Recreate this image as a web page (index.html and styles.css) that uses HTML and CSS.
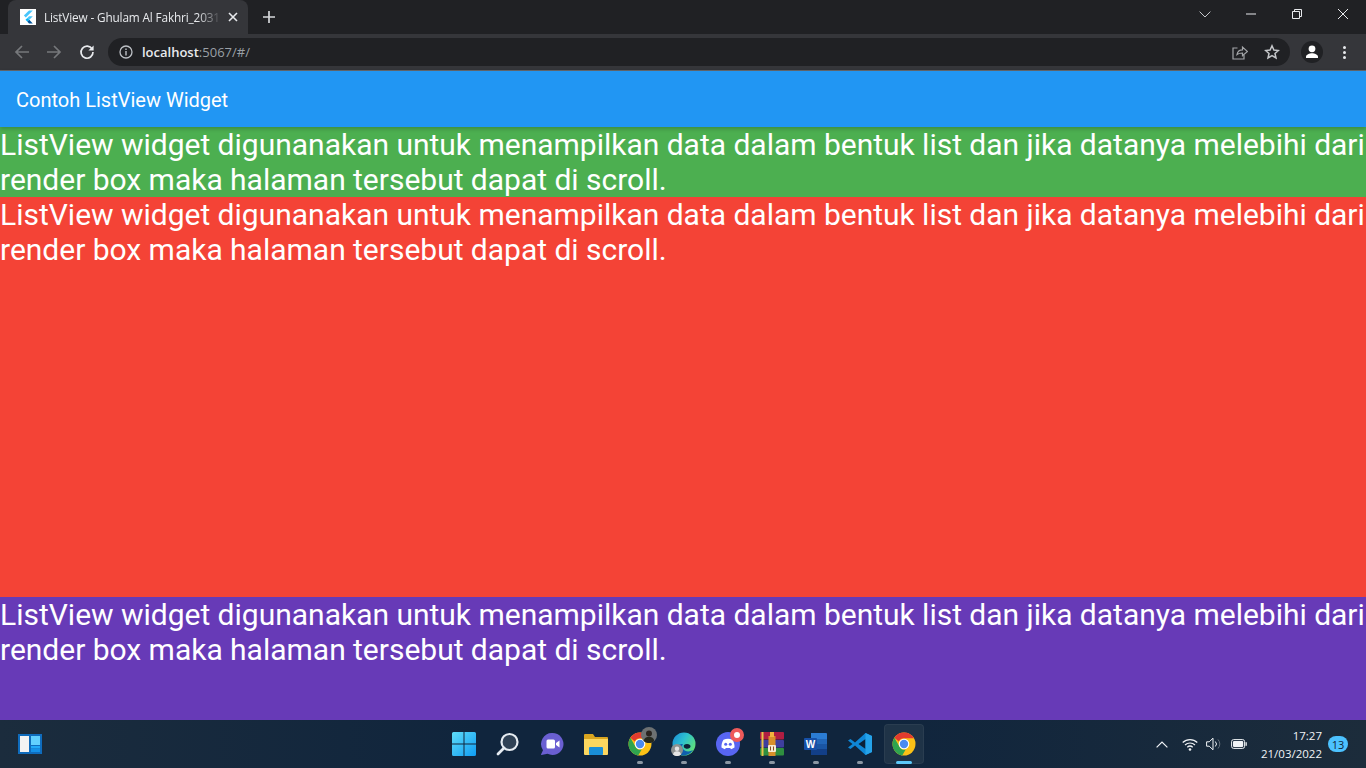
FILE: index.html
```html
<!DOCTYPE html>
<html lang="en">
<head>
  <meta charset="UTF-8" />
  <title>ListView - Ghulam Al Fakhri</title>
  <link rel="stylesheet" href="styles.css">
</head>
<body>
  <div class="tabstrip">
    <div class="tab">
      <span class="favicon">
        <svg width="16" height="16" viewBox="0 0 16 16"><path d="M9 1.500h3.800L5.800 8.500 3.900 6.600z" fill="#47c5fb"/><path d="M9 7.300h3.800L9.300 10.800l-1.900-1.900z" fill="#47c5fb"/><path d="M5.500 10.800l1.900-1.900 1.900 1.900-1.900 1.900z" fill="#00b5f8"/><path d="M7.400 12.700l1.900-1.900 3.500 3.700H9z" fill="#00569e"/></svg>
      </span>
      <span class="tab-title">ListView - Ghulam Al Fakhri_2031</span>
      <svg class="tab-close" width="10" height="10" viewBox="0 0 10 10"><path d="M1 1l8 8M9 1l-8 8" stroke="#e8eaed" stroke-width="1.6"/></svg>
    </div>
    <svg class="new-tab" width="12" height="12" viewBox="0 0 12 12"><path d="M6 0v12M0 6h12" stroke="#d5d7da" stroke-width="1.7"/></svg>
    <div class="window-controls">
      <svg class="win-chevron" width="12" height="7" viewBox="0 0 12 7"><path d="M.6.6L6 6l5.400-5.400" fill="none" stroke="#c6c8cb"/></svg>
      <svg class="win-min" width="10" height="2" viewBox="0 0 10 2"><path d="M0 1h10" stroke="#e8eaed"/></svg>
      <svg class="win-restore" width="10" height="10" viewBox="0 0 10 10"><path d="M.5 2.500h7v7h-7zM2.500 2.500v-2h7v7h-2" fill="none" stroke="#e8eaed"/></svg>
      <svg class="win-close" width="10" height="10" viewBox="0 0 10 10"><path d="M0 0l10 10M10 0L0 10" stroke="#e8eaed"/></svg>
    </div>
  </div>

  <div class="toolbar">
    <svg class="nav-btn" width="16" height="16" viewBox="0 0 16 16"><path d="M15 8H2M8 2L2 8l6 6" fill="none" stroke="#76787b" stroke-width="1.7"/></svg>
    <svg class="nav-btn" width="16" height="16" viewBox="0 0 16 16"><path d="M1 8h13M8 2l6 6-6 6" fill="none" stroke="#76787b" stroke-width="1.7"/></svg>
    <svg class="nav-btn nav-reload" width="16" height="16" viewBox="0 0 16 16"><path d="M13.200 5.200A6 6 0 1 0 14 8" fill="none" stroke="#e8eaed" stroke-width="1.700"/><path d="M14.600 1.400v5.200H9.400z" fill="#e8eaed"/></svg>
    <div class="omnibox">
      <svg class="info-icon" width="14" height="14" viewBox="0 0 14 14"><circle cx="7" cy="7" r="6" fill="none" stroke="#bdc1c6" stroke-width="1.300"/><path d="M7 6v4.400M7 3.600V5" stroke="#bdc1c6" stroke-width="1.400"/></svg>
      <span class="url"><b>localhost</b>:5067/#/</span>
      <svg class="share-icon" width="16" height="16" viewBox="0 0 16 16"><path d="M5.500 4H1v11h11v-4" fill="none" stroke="#a4a6a9" stroke-width="1.200"/><path d="M5 10.500C5.500 7.500 8 5.800 10.500 5.800V3l5 4.500-5 4.300V9C8.300 9 6.500 9.300 5 10.500z" fill="none" stroke="#a4a6a9" stroke-width="1.200"/></svg>
      <svg class="star-icon" width="16" height="16" viewBox="0 0 16 16"><path d="M8 1.800l1.900 4.200 4.500.5-3.400 3 1 4.500L8 11.700 4 14l1-4.500-3.400-3 4.500-.5z" fill="none" stroke="#c5c7ca" stroke-width="1.500"/></svg>
    </div>
    <span class="avatar">
      <svg width="16" height="16" viewBox="0 0 16 16"><circle cx="8" cy="4.800" r="3.400" fill="#fff"/><path d="M2 14v-1c0-2.500 3.500-3.700 6-3.700s6 1.200 6 3.700v1z" fill="#fff"/></svg>
    </span>
    <span class="menu-dots"><i></i><i></i><i></i></span>
  </div>

  <header class="app-bar">Contoh ListView Widget</header>

  <main class="list-view">
    <section class="item item-green">ListView widget digunanakan untuk menampilkan data dalam bentuk list dan jika datanya melebihi dari render box maka halaman tersebut dapat di scroll.</section>
    <section class="item item-red">ListView widget digunanakan untuk menampilkan data dalam bentuk list dan jika datanya melebihi dari render box maka halaman tersebut dapat di scroll.</section>
    <section class="item item-purple">ListView widget digunanakan untuk menampilkan data dalam bentuk list dan jika datanya melebihi dari render box maka halaman tersebut dapat di scroll.</section>
  </main>

  <footer class="taskbar">
    <div class="task-left">
      <svg width="24" height="20" viewBox="0 0 24 20"><rect width="24" height="20" fill="#0f6cbd"/><rect x="2" y="2" width="9" height="16" fill="#f3f3f3"/><rect x="13" y="2" width="9" height="9" fill="#62d0ff"/><rect x="13" y="12" width="9" height="2.500" fill="#20a8f8"/><rect x="13" y="15" width="9" height="3" fill="#1490e8"/></svg>
    </div>
    <div class="task-center">
      <span class="task-icon">
        <svg width="24" height="24" viewBox="0 0 24 24"><defs><linearGradient id="winblue" x1="0" y1="0" x2="1" y2="1"><stop offset="0" stop-color="#5fdcf8"/><stop offset="1" stop-color="#0f9cf3"/></linearGradient></defs><path d="M0 1.500A1.500 1.500 0 0 1 1.500 0h10v11.500H0zM12.500 0h10A1.500 1.500 0 0 1 24 1.500v10H12.500zM0 12.500h11.500V24h-10A1.500 1.500 0 0 1 0 22.500zM12.500 12.500H24v10a1.500 1.500 0 0 1-1.500 1.500h-10z" fill="url(#winblue)"/></svg>
      </span>
      <span class="task-icon">
        <svg width="24" height="24" viewBox="0 0 24 24"><circle cx="13.500" cy="10" r="8" fill="#2f4155" stroke="#e6ecf2" stroke-width="2.200"/><path d="M8 16l-6 6" stroke="#e6ecf2" stroke-width="2.800" stroke-linecap="round"/></svg>
      </span>
      <span class="task-icon">
        <svg width="24" height="24" viewBox="0 0 24 24"><path d="M12.500 1a11 11 0 1 1-5 20.800L1.500 23c-.5 0-.6-.4-.4-.8l1.900-4A11 11 0 0 1 12.500 1z" fill="#6a5fd2"/><rect x="6.500" y="7.500" width="8.500" height="9" rx="1.500" fill="#fff"/><path d="M16 11l3.500-2.500v7L16 13z" fill="#fff"/></svg>
      </span>
      <span class="task-icon">
        <svg width="24" height="22" viewBox="0 0 24 22"><path d="M0 2a1 1 0 0 1 1-1h8l2 3h12a1 1 0 0 1 1 1v3H0z" fill="#d9a520"/><path d="M0 6h24v15a1 1 0 0 1-1 1H1a1 1 0 0 1-1-1z" fill="#fcd75f"/><rect x="5" y="14" width="14" height="8" rx="1" fill="#1a8fd8"/></svg>
      </span>
      <span class="task-icon running">
        <svg width="24" height="24" viewBox="0 0 24 24"><use href="#chrome-mark"/></svg>
        <svg class="profile-badge badge-chrome" width="16" height="16" viewBox="0 0 15 15"><circle cx="7.500" cy="7.500" r="7.500" fill="#6d7172"/><circle cx="7.500" cy="6" r="2.800" fill="#2a2420"/><path d="M2.500 13.200c.5-3 2.500-4 5-4s4.500 1 5 4a7.500 7.500 0 0 1-10 0z" fill="#26291f"/></svg>
      </span>
      <span class="task-icon running">
        <svg width="24" height="24" viewBox="0 0 24 24"><defs><linearGradient id="edgeblue" x1="0" y1="0" x2="1" y2=".6"><stop offset="0" stop-color="#1a8ad8"/><stop offset=".5" stop-color="#2cc0d0"/><stop offset="1" stop-color="#5fe07a"/></linearGradient></defs><circle cx="12" cy="12" r="11.500" fill="url(#edgeblue)"/><path d="M2 18c2 4 7 6 12 5 3-.7 5.500-2.500 7-5-3 2-8 2-10-1-1.500-2-1-4 0-5C7 12 3 14 2 18z" fill="#0f5fae"/><path d="M12 13c1.500-1.200 4.500-1.200 6 0 .8.8.8 2.200-.4 3-1.700 1.200-4.600.8-5.600-.8-.4-.7-.4-1.500 0-2.200z" fill="#0c2238"/></svg>
        <svg class="profile-badge badge-edge" width="12" height="12" viewBox="0 0 15 15"><circle cx="7.500" cy="7.500" r="7.500" fill="#8e9190"/><circle cx="7.500" cy="6" r="2.800" fill="#e4e4e4"/><path d="M2.500 13.200c.5-3 2.500-4 5-4s4.500 1 5 4a7.500 7.500 0 0 1-10 0z" fill="#e4e4e4"/></svg>
      </span>
      <span class="task-icon running">
        <svg width="24" height="24" viewBox="0 0 24 24"><circle cx="12" cy="12" r="12" fill="#5865f2"/><path d="M7.500 7.800c3-1.300 6-1.300 9 0 1.500 2.300 2.200 4.900 2 7.700-1.200.9-2.400 1.400-3.500 1.700l-.8-1.300H9.800L9 17.200c-1.100-.3-2.300-.8-3.500-1.700-.2-2.800.5-5.400 2-7.700z" fill="#fff"/><circle cx="9.700" cy="12.300" r="1.500" fill="#5865f2"/><circle cx="14.300" cy="12.300" r="1.500" fill="#5865f2"/></svg>
        <span class="notify-badge"></span>
      </span>
      <span class="task-icon running">
        <svg width="24" height="24" viewBox="0 0 24 24"><rect y="0" width="24" height="7.500" rx="1" fill="#b01e42"/><rect y="8" width="24" height="7.500" rx="1" fill="#3f3f9f"/><rect y="16" width="24" height="7.500" rx="1" fill="#2f8f3f"/><rect x="1.500" y="0" width="2" height="24" fill="#e8c24a"/><rect x="8.500" y="4" width="7" height="20" fill="#d98f2b"/><rect x="10" y="0" width="4" height="5" fill="#f2b33d"/><rect x="8" y="13" width="8" height="7" rx="1" fill="#f6ead2"/><path d="M10.500 14.500v4M13.500 14.500v4" stroke="#8a4a20"/></svg>
      </span>
      <span class="task-icon running">
        <svg width="24" height="24" viewBox="0 0 24 24"><path d="M7 1h15a1 1 0 0 1 1 1v20a1 1 0 0 1-1 1H7z" fill="#2b7cd3"/><rect x="7" y="7" width="16" height="5" fill="#2266b8"/><rect x="7" y="12" width="16" height="5" fill="#1a55a3"/><rect x="7" y="17" width="16" height="6" fill="#123f88"/><rect x="0" y="6" width="13" height="12" rx="1" fill="#1650a8"/><text class="word-w" x="6.500" y="15.500" text-anchor="middle">W</text></svg>
      </span>
      <span class="task-icon running">
        <svg width="24" height="24" viewBox="0 0 24 24"><path d="M17.500 1L24 4v16l-6.500 3L7 13.500 2.500 17 0 15.500 4.500 12 0 8.500 2.500 7 7 10.500z" fill="#0f87d6"/><path d="M17.500 7L10.500 12l7 5z" fill="#0c2238"/><path d="M17.500 1L24 4v16l-6.500 3z" fill="#25a3ea"/></svg>
      </span>
      <span class="task-icon active">
        <svg width="24" height="24" viewBox="0 0 24 24">
          <g id="chrome-mark">
            <circle cx="12" cy="12" r="11.500" fill="#fbc116"/>
            <path d="M12 .5a11.500 11.500 0 0 1 10 5.800H12a5.700 5.700 0 0 0-5.200 3.300L2.400 5.700A11.500 11.500 0 0 1 12 .5z" fill="#e33b2e"/>
            <path d="M2.400 5.700l5 8.700a5.700 5.700 0 0 0 6.300 3.200l-3.500 5.800A11.500 11.500 0 0 1 2.400 5.700z" fill="#2fa44f"/>
            <circle cx="12" cy="12" r="5.300" fill="#fff"/>
            <circle cx="12" cy="12" r="4.200" fill="#4a8af0"/>
          </g>
        </svg>
      </span>
    </div>
    <div class="task-right">
      <svg width="12" height="7" viewBox="0 0 12 7"><path d="M.6 6.400L6 1l5.400 5.400" fill="none" stroke="#f0f3f6" stroke-width="1.200"/></svg>
      <svg class="tray-wifi" width="16" height="13" viewBox="0 0 16 13"><path d="M.7 4.500a10.500 10.500 0 0 1 14.600 0M3 7a7.200 7.200 0 0 1 10 0M5.300 9.300a3.900 3.900 0 0 1 5.400 0" fill="none" stroke="#f0f3f6" stroke-width="1.200"/><circle cx="8" cy="11.500" r="1.300" fill="#f0f3f6"/></svg>
      <svg class="tray-sound" width="16" height="14" viewBox="0 0 16 14"><path d="M.6 4.800h2.600L7 1.200v11.600L3.200 9.200H.6z" fill="none" stroke="#f0f3f6"/><path d="M9.300 4.500a3.500 3.500 0 0 1 0 5" fill="none" stroke="#f0f3f6"/><path d="M12 2.500a6.500 6.500 0 0 1 0 9" fill="none" stroke="#66717c"/></svg>
      <svg class="tray-battery" width="16" height="10" viewBox="0 0 16 10"><rect x=".6" y=".6" width="13" height="8.800" rx="2" fill="none" stroke="#f0f3f6"/><rect x="2" y="2" width="10.200" height="6" rx="1" fill="#f0f3f6"/><rect x="14.500" y="3.200" width="1.300" height="3.600" fill="#f0f3f6"/></svg>
      <div class="clock"><span>17:27</span><span>21/03/2022</span></div>
      <span class="notify-count">13</span>
    </div>
  </footer>
</body>
</html>
```

FILE: styles.css
```css
* {
  box-sizing: border-box;
}

html, body {
  margin: 0;
  height: 768px;
  overflow: hidden;
}

body {
  display: flex;
  flex-direction: column;
  width: 1366px;
  font-family: Roboto, sans-serif;
  background: #202124;
}

/* browser frame */
.tabstrip {
  display: flex;
  align-items: center;
  height: 34px;
  flex: none;
  padding-left: 8px;
  background: #202124;
}

.tab {
  display: flex;
  align-items: center;
  width: 240px;
  height: 34px;
  padding: 0 10px 0 12px;
  background: #35363a;
  border-radius: 8px 8px 0 0;
}

.favicon {
  display: flex;
  align-items: center;
  justify-content: center;
  width: 16px;
  height: 16px;
  background: #fff;
  flex: none;
}

.tab-title {
  flex: 1;
  margin-left: 8px;
  white-space: nowrap;
  font: 11.8px "Open Sans", "Liberation Sans", sans-serif;
  letter-spacing: -.15px;
  color: #e8eaed;
  -webkit-mask-image: linear-gradient(90deg, #000 86%, transparent);
  mask-image: linear-gradient(90deg, #000 86%, transparent);
}

.tab-close {
  flex: none;
  margin-left: 6px;
}

.new-tab {
  margin-left: 15px;
}

.window-controls {
  display: flex;
  align-items: center;
  margin-left: auto;
  margin-top: -6px;
}

.win-chevron {
  margin-right: 35px;
}

.win-min {
  margin-right: 36px;
}

.win-restore {
  margin-right: 36px;
}

.win-close {
  margin-right: 18px;
}

.toolbar {
  display: flex;
  align-items: center;
  height: 36px;
  flex: none;
  padding-left: 14px;
  background: #35363a;
}

.nav-btn {
  margin-right: 16px;
}

.nav-reload {
  margin-left: 1px;
}

.omnibox {
  display: flex;
  align-items: center;
  width: 1182px;
  height: 28px;
  margin-left: -3px;
  padding: 0 10px 0 11px;
  background: #202124;
  border-radius: 14px;
}

.info-icon {
  flex: none;
}

.url {
  margin-left: 9px;
  font: 13px "Open Sans", "Liberation Sans", sans-serif;
  color: #9aa0a6;
}

.url b {
  font-weight: 600;
  color: #e8eaed;
}

.share-icon {
  margin-left: auto;
  margin-right: 16px;
}

.avatar {
  display: flex;
  align-items: center;
  justify-content: center;
  width: 22px;
  height: 22px;
  margin-left: 11px;
  border-radius: 50%;
  background: #202124;
}

.menu-dots {
  display: flex;
  flex-direction: column;
  gap: 2px;
  margin-left: 20px;
}

.menu-dots i {
  display: block;
  width: 3px;
  height: 3px;
  border-radius: 50%;
  background: #e8eaed;
}

/* flutter page */
.app-bar {
  position: relative;
  z-index: 1;
  display: flex;
  align-items: center;
  height: 57px;
  flex: none;
  padding: 2px 0 0 16px;
  border-top: 1px solid #5f6368;
  font-size: 20px;
  color: #fff;
  background: #2196f3;
  box-shadow: 0 2px 4px rgba(0, 0, 0, .2);
}

.list-view {
  flex: 1;
  min-height: 0;
  overflow: hidden;
}

.item {
  font-size: 30px;
  line-height: 35.16px;
  word-spacing: -.1px;
  color: #fff;
}

.item-green {
  height: 70.3px;
  background: #4caf50;
}

.item-red {
  height: 400px;
  background: #f44336;
}

.item-purple {
  height: 123px;
  background: #673ab7;
}

/* windows taskbar */
.taskbar {
  position: relative;
  display: flex;
  align-items: center;
  height: 48px;
  flex: none;
  background: linear-gradient(90deg, #1b2c3d, #10253d 35%, #10253d 65%, #1c2c3b);
}

.task-left {
  display: flex;
  padding-left: 18px;
}

.task-center {
  position: absolute;
  left: 444px;
  top: 4px;
  display: flex;
  gap: 4px;
}

.task-icon {
  position: relative;
  display: flex;
  align-items: center;
  justify-content: center;
  width: 40px;
  height: 40px;
  border-radius: 4px;
}

.task-icon.running::after,
.task-icon.active::after {
  content: "";
  position: absolute;
  left: 17px;
  bottom: 0;
  width: 6px;
  height: 3px;
  border-radius: 2px;
  background: #8b97a3;
}

.task-icon.active {
  background: #1f3347;
  box-shadow: inset 0 0 0 1px rgba(255, 255, 255, .05);
}

.task-icon.active::after {
  left: 12px;
  width: 16px;
  background: #5cc8fa;
}

.profile-badge {
  position: absolute;
}

.badge-chrome {
  top: 3px;
  right: 3px;
}

.badge-edge {
  left: 7px;
  top: 20px;
}

.notify-badge {
  position: absolute;
  top: 4px;
  right: 4px;
  width: 14px;
  height: 14px;
  border-radius: 50%;
  border: 4px solid #ee5a5a;
  background: #fff;
}

.word-w {
  font: 700 10px "Liberation Sans", sans-serif;
  fill: #fff;
}

.task-right {
  display: flex;
  align-items: center;
  margin-left: auto;
  padding-right: 18px;
}

.tray-wifi {
  margin-left: 14px;
}

.tray-sound {
  margin-left: 8px;
}

.tray-battery {
  margin-left: 9px;
}

.clock {
  display: flex;
  flex-direction: column;
  align-items: flex-end;
  gap: 3px;
  margin-left: 14px;
  font: 11.5px "Open Sans", "Liberation Sans", sans-serif;
  color: #f0f3f6;
}

.notify-count {
  display: flex;
  align-items: center;
  justify-content: center;
  width: 20px;
  height: 16px;
  margin-left: 6px;
  border-radius: 8px;
  font: 11px "Open Sans", "Liberation Sans", sans-serif;
  color: #10253a;
  background: #4cc2ff;
}
```
